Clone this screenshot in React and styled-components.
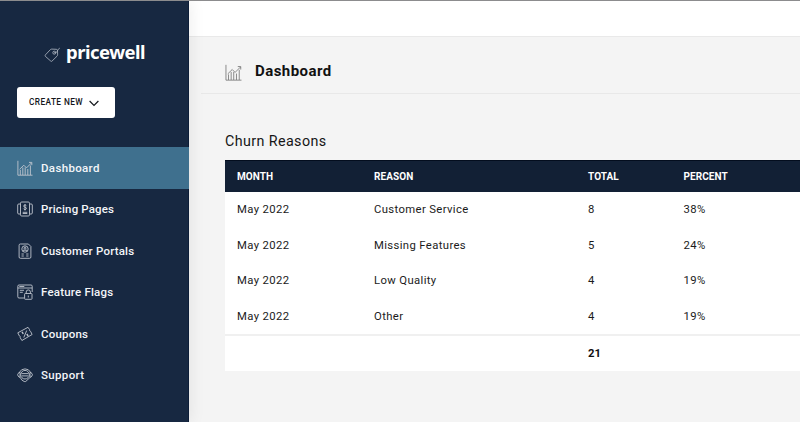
import React from "react";
import styled, { createGlobalStyle } from "styled-components";

const GlobalStyle = createGlobalStyle`
  * { box-sizing: border-box; }
  html, body { margin: 0; padding: 0; }
  body {
    font-family: Roboto, "Liberation Sans", sans-serif;
    background: #f4f4f4;
    color: #111;
    overflow: hidden;
  }
`;

const Page = styled.div`
  display: flex;
  width: 800px;
  height: 422px;
  border-top: 1px solid #8c8c8e;
  overflow: hidden;
`;

const Sidebar = styled.aside`
  flex: 0 0 189px;
  display: flex;
  flex-direction: column;
  align-items: stretch;
  background: #172841;
  border-right: 1px solid #0c1d38;
  box-shadow: 0 0 16px rgba(0, 0, 0, 0.09);
  z-index: 1;
`;

const Logo = styled.div`
  display: flex;
  align-items: center;
  height: 30px;
  margin: 37px 0 0 44px;
  color: #fff;
`;

const TagIcon = styled.svg`
  width: 17px;
  height: 18px;
  fill: none;
  stroke: #b3bac5;
  stroke-width: 0.8;
  margin-top: 1px;
`;

const LogoText = styled.span`
  margin: -3px 0 0 5px;
  font: 700 18.5px/28px "Noto Sans", sans-serif;
  letter-spacing: -0.5px;
`;

const CreateButton = styled.button`
  display: flex;
  align-items: center;
  gap: 6px;
  width: 98px;
  height: 31px;
  margin: 19px 0 29px 17px;
  padding: 0 0 2px 12px;
  border: 0;
  border-radius: 3px;
  background: #fff;
  color: #14171c;
  font: 500 8.3px/12px Roboto, sans-serif;
  letter-spacing: 0.4px;
  white-space: nowrap;
`;

const Chevron = styled.svg`
  width: 10px;
  height: 7px;
  fill: none;
  stroke: #14171c;
  stroke-width: 1.2;
  margin-top: 3px;
`;

const Nav = styled.nav`
  display: flex;
  flex-direction: column;
  margin-right: -1px;
`;

const NavItem = styled.a`
  display: flex;
  align-items: center;
  gap: 8px;
  height: 41.5px;
  padding-left: 17px;
  color: #f3f5f8;
  background: ${(p) => (p.$active ? "#3f708e" : "transparent")};
  font-size: 11.5px;
  font-weight: 500;
  line-height: 16px;
`;

const Label = styled.span`
  letter-spacing: ${(p) => p.$spacing ?? 0}px;
`;

const Icon = styled.svg`
  width: 16px;
  height: 16px;
  flex: none;
  fill: none;
  stroke: ${(p) => (p.$dark ? "#666" : "#bfc5ce")};
  stroke-width: ${(p) => (p.$dark ? 0.7 : 0.9)};
`;

const Main = styled.main`
  flex: 1;
  display: flex;
  flex-direction: column;
  min-width: 0;
`;

const TopBar = styled.header`
  height: 36px;
  background: #fff;
  border-bottom: 1px solid #e9e9e9;
`;

const TitleBar = styled.div`
  display: flex;
  align-items: flex-start;
  gap: 13px;
  height: 57px;
  margin-left: 12px;
  padding: 12px 0 0 24px;
  border-bottom: 1px solid #e8e8e8;

  svg { width: 17px; height: 17px; margin-top: 15px; }
`;

const Title = styled.h1`
  margin: 12px 0 0 0;
  font-size: 15px;
  font-weight: 700;
  line-height: 20px;
  letter-spacing: 0.44px;
  color: #111;
`;

const Section = styled.section`
  margin-left: 36px;
  padding-top: 37px;
`;

const Heading = styled.h2`
  margin: 0;
  height: 29px;
  font-size: 14.3px;
  font-weight: 400;
  line-height: 20px;
  letter-spacing: 0.4px;
  color: #161616;
`;

const Table = styled.div`
  width: 575px;
  background: #fff;
`;

const Row = styled.div`
  display: grid;
  grid-template-columns: 137px 214px 95.5px 1fr;
  align-items: center;
  height: 35.6px;
  padding: 1px 0 0 12px;
  font-size: 11.3px;
  line-height: 16px;
  letter-spacing: 0.37px;
  color: #1b1b1b;
`;

const HeadRow = styled(Row)`
  height: 32px;
  padding-top: 0;
  background: #122035;
  border-top: 1px solid #030d1e;
  color: #fff;
  font-size: 10px;
  font-weight: 700;
  letter-spacing: 0.08px;
`;

const TotalRow = styled(Row)`
  height: 37px;
  padding-top: 0;
  border-top: 2px solid #f0f0f0;
  font-weight: 700;
  letter-spacing: 0;
  color: #111;
`;

const Cell = styled.span`
  grid-column: ${(p) => p.$column ?? "auto"};
`;

const glyphs = {
  chart: (
    <>
      <path d="M.9 .8v14.4h14.6" />
      <path d="M3.3 15V9.8M5.8 15V7.5M8.2 15V7.5M10.8 15V9M13.4 15V5.5" />
      <path d="M2.6 9.3l4.2-4.1L9.5 7.9l5-5M12 2.4h2.8v2.8" />
    </>
  ),
  pages: (
    <>
      <rect x="3.5" y="1" width="9" height="14" rx="1.2" />
      <path d="M3.2 3H1.8Q.7 3 .7 4v8q0 1 1.1 1h1.4M12.8 3h1.4q1.1 0 1.1 1v8q0 1-1.1 1h-1.4" />
      <path d="M9.4 4.7Q8.8 4 8 4C6.2 4 6.1 6 8 6.2c2 .2 1.8 2.3 0 2.3-.8 0-1.4-.4-1.6-.9M8 3v6.5M5.7 12.5h4.6M5.7 11.3h4.6" />
    </>
  ),
  portal: (
    <>
      <path d="M3.4 1h8l2.5 2.5V14q0 1.3-1.3 1.3H3.4Q2.1 15.3 2.1 14V2.3Q2.1 1 3.4 1z" />
      <circle cx="8" cy="6" r="3.2" />
      <circle cx="8" cy="5.2" r="1" />
      <path d="M6.2 8.3V7.2h3.6v1.1M4.5 11h2.3M9.2 11h2.3M4.5 13h2.3M9.2 13h2.3" />
    </>
  ),
  flags: (
    <>
      <path d="M7.2 14H2Q.8 14 .8 12.8V2.2Q.8 1 2 1h12q1.2 0 1.2 1.2V8M.8 4h14.4M2.3 2.5h5" />
      <path d="M2.8 6.3H7M2.8 8.3h3" />
      <rect x="7.6" y="9.5" width="7.4" height="5.8" rx=".7" />
      <path d="M9.2 9.5V8a2.1 2.1 0 014.2 0v1.5M11.3 11.5v2" />
    </>
  ),
  coupon: (
    <>
      <path d="M.8 6.8L11 1.3l1.6 2.4q-.4 1.3 1 1.7l1.5 3.1-10.2 6-1.7-2.8q.7-1.4-.9-1.8z" />
      <path d="M9.7 4.5l-2.9 7" />
      <path d="M5 5.8l1.3 2M9.8 8l1.3 2" strokeWidth="1.4" />
    </>
  ),
  support: (
    <>
      <circle cx="8" cy="7.7" r="4.3" />
      <path d="M2.4 5.3a6.3 6.3 0 0111.2 0M4.6 6.6h6.8M4.8 8.9h6.4" />
      <path d="M3 5.5H1.9L.5 7.8l1.5 2.4H3zM13 5.5h1.1l1.4 2.3-1.5 2.4H13z" />
      <path d="M3.2 10.3q1 3.2 4 4.2h1.5l4.3-4" />
    </>
  ),
};

const navItems = [
  { icon: "chart", label: "Dashboard", spacing: 0.34, active: true },
  { icon: "pages", label: "Pricing Pages", spacing: 0.16 },
  { icon: "portal", label: "Customer Portals", spacing: 0.2 },
  { icon: "flags", label: "Feature Flags", spacing: 0.2 },
  { icon: "coupon", label: "Coupons", spacing: 0.2 },
  { icon: "support", label: "Support", spacing: 0.35 },
];

const reasons = [
  ["May 2022", "Customer Service", "8", "38%"],
  ["May 2022", "Missing Features", "5", "24%"],
  ["May 2022", "Low Quality", "4", "19%"],
  ["May 2022", "Other", "4", "19%"],
];

export default function App() {
  return (
    <>
      <GlobalStyle />
      <Page>
        <Sidebar>
          <Logo>
            <TagIcon viewBox="0 0 17 18">
              <path d="M1.4 9.9L6.3 4.7q.6-.6 1.4-.6l4.6.2q1.2.1 1.2 1.3l.1 4.2q0 .8-.6 1.4l-5 4.9q-.6.6-1.2 0L1.4 11.4q-.6-.8 0-1.5z" />
              <circle cx="10.3" cy="7.7" r="1.5" />
              <path d="M10 7.8q2.7.3 3.3-1.7t2.5-3" />
            </TagIcon>
            <LogoText>pricewell</LogoText>
          </Logo>
          <CreateButton>
            CREATE NEW
            <Chevron viewBox="0 0 10 7"><path d="M.6 1L5 5.4 9.4 1" /></Chevron>
          </CreateButton>
          <Nav>
            {navItems.map((item) => (
              <NavItem key={item.label} $active={item.active}>
                <Icon viewBox="0 0 16 16">{glyphs[item.icon]}</Icon>
                <Label $spacing={item.spacing}>{item.label}</Label>
              </NavItem>
            ))}
          </Nav>
        </Sidebar>
        <Main>
          <TopBar />
          <TitleBar>
            <Icon $dark viewBox="0 0 16 16">{glyphs.chart}</Icon>
            <Title>Dashboard</Title>
          </TitleBar>
          <Section>
            <Heading>Churn Reasons</Heading>
            <Table>
              <HeadRow>
                {["MONTH", "REASON", "TOTAL", "PERCENT"].map((name) => (
                  <Cell key={name}>{name}</Cell>
                ))}
              </HeadRow>
              {reasons.map((row) => (
                <Row key={row[1]}>
                  {row.map((value, i) => <Cell key={i}>{value}</Cell>)}
                </Row>
              ))}
              <TotalRow>
                <Cell $column={3}>21</Cell>
              </TotalRow>
            </Table>
          </Section>
        </Main>
      </Page>
    </>
  );
}
